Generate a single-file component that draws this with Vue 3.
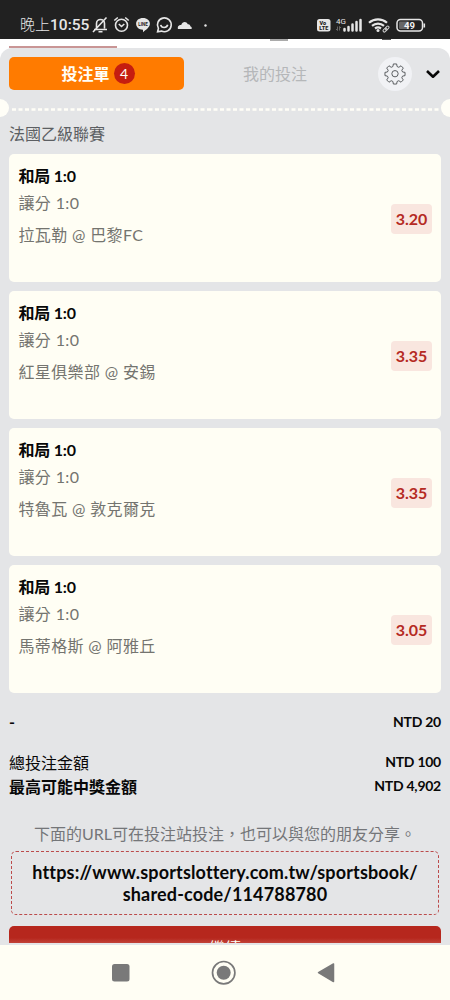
<script setup>
import { ref } from 'vue'

// 投注單內容
const bets = ref([
    { pick: '和局 1:0', market: '讓分 1:0', match: '拉瓦勒 @ 巴黎FC', odds: '3.20' },
    { pick: '和局 1:0', market: '讓分 1:0', match: '紅星俱樂部 @ 安錫', odds: '3.35' },
    { pick: '和局 1:0', market: '讓分 1:0', match: '特魯瓦 @ 敦克爾克', odds: '3.35' },
    { pick: '和局 1:0', market: '讓分 1:0', match: '馬蒂格斯 @ 阿雅丘', odds: '3.05' }
])
</script>

<template>
    <div class="phone">
        <!-- 狀態列 -->
        <header class="status">
            <span class="time">晚上<b>10:55</b></span>
            <svg class="status-left" width="124" height="20" viewBox="0 0 124 20" fill="none" stroke="#e6e6e6" stroke-width="1.6">
                <!-- 靜音 -->
                <path d="M2 14.500h13M4.500 13.500V8.500a4 4 0 0 1 8 0v5M6.500 16.800h4M1 17L14.500 2.500" />
                <!-- 鬧鐘 -->
                <circle cx="29.500" cy="10.300" r="6" />
                <path d="M26.800 9l2.700 2.500L32.300 9M22.300 5.500l3.500-3M36.700 5.500l-3.500-3" />
                <!-- LINE -->
                <path d="M51 3c4.100 0 6.900 2.500 6.900 5.800 0 3.500-4 6-6.900 8.500v-2.600c-4.100 0-6.900-2.500-6.900-5.900S46.900 3 51 3z" fill="#e6e6e6" stroke="none" />
                <text x="51" y="10.800" font-size="4.500" font-weight="700" text-anchor="middle" fill="#222" stroke="none">LINE</text>
                <!-- 對話 -->
                <path d="M65.600 16.700l.8-3.300a6.900 6.900 0 1 1 3 2.700z" />
                <path d="M68.700 9.800c.8 3.600 6 3.600 7 0" />
                <!-- 雲 -->
                <path d="M86 14c-.8-2.500 1-4.200 3.200-4 1-3.300 5-4.200 6.600-.8 1.800-.3 2.500 1 2.500 2 1.400.3 1.900 1.800 1.200 2.800z" fill="#e6e6e6" stroke="none" />
                <circle cx="113.500" cy="10.500" r="1.200" fill="#e6e6e6" stroke="none" />
            </svg>
            <svg class="status-right" width="110" height="20" viewBox="0 0 110 20" fill="none" stroke="#e6e6e6">
                <!-- VoLTE -->
                <rect x="1" y="4" width="13.500" height="12.500" rx="2.500" fill="#e6e6e6" stroke="none" />
                <g fill="#222" stroke="none" font-weight="900" text-anchor="middle">
                    <text x="6.800" y="9.900" font-size="5.500">Vo</text>
                    <text x="7.800" y="15.200" font-size="5.500">LTE</text>
                </g>
                <!-- 訊號 -->
                <text x="20" y="8.800" font-size="8" fill="#e6e6e6" stroke="none">4G</text>
                <path d="M21.500 11.500v4l-1.500-1.500M23.500 15.500v-4l1.500 1.500" stroke="#777" stroke-width=".8" />
                <path d="M28.500 14V15.500M32.500 12V15.500M36.500 9.500V15.500M40.500 7V15.500M44.500 5V15.500" stroke-width="2.500" stroke-linecap="round" />
                <!-- Wi-Fi -->
                <path d="M53 7.800c5.200-4.600 12.800-4.600 18 0M56 10.800c3.500-3 8.500-3 12 0M59 13.500c2-1.500 4-1.500 6 0" stroke-width="2.200" />
                <circle cx="62" cy="15.500" r="1.500" fill="#e6e6e6" stroke="none" />
                <g transform="rotate(-45 70 14)" stroke-width="1" stroke="#ccc">
                    <rect x="66.300" y="12.800" width="4.400" height="2.500" rx="1.200" />
                    <rect x="69.300" y="12.800" width="4.400" height="2.500" rx="1.200" />
                </g>
                <!-- 電量 -->
                <rect x="81" y="4.500" width="25.500" height="11.500" rx="3.500" stroke-width="1.500" />
                <rect x="83" y="6.500" width="10" height="7.500" rx="1" fill="#666" stroke="none" />
                <path d="M108.300 8.500v4" stroke-width="1.600" />
                <text x="93.500" y="13.500" font-size="9.500" font-weight="700" text-anchor="middle" fill="#f2f2f2" stroke="none">49</text>
            </svg>
        </header>

        <!-- 底層頁面露出的部分 -->
        <div class="behind">
            <i class="scrap"></i>
            <i class="scrap small"></i>
            <i class="red-line"></i>
        </div>

        <main class="sheet">
            <div class="tabs">
                <div class="tab active">投注單<span class="count">4</span></div>
                <div class="tab">我的投注</div>
                <div class="gear">
                    <svg width="22" height="22" viewBox="-0.500 0 23 23" fill="none" stroke="#55585b" stroke-width="1">
                        <path d="M9.300 1h3.400l.5 2.700 1.800.8 2.300-1.600 2.400 2.400-1.600 2.300.8 1.800 2.600.4v3.400l-2.600.5-.8 1.800 1.600 2.200-2.400 2.400-2.300-1.600-1.800.8-.5 2.700H9.300l-.5-2.700-1.800-.8-2.300 1.600-2.400-2.400 1.600-2.200-.8-1.800L.5 13.200V9.800l2.600-.4.8-1.800-1.600-2.300 2.400-2.400L7 4.500l1.800-.8z" stroke-linejoin="round" />
                        <circle cx="11" cy="11.200" r="3.300" />
                    </svg>
                </div>
                <svg class="arrow" width="14" height="10" viewBox="0 0 14 10" fill="none" stroke="#080808" stroke-width="2.600">
                    <path d="M1 2l6 5.700L13 2" stroke-linejoin="round" />
                </svg>
            </div>

            <!-- 票券撕線 -->
            <div class="tear">
                <i class="notch"></i>
                <svg width="432" height="3" viewBox="0 0 432 3">
                    <path d="M3 1.500h428" stroke="#fffef7" stroke-width="2.600" stroke-dasharray="4 2.500" />
                </svg>
                <i class="notch"></i>
            </div>

            <h2 class="league">法國乙級聯賽</h2>
            <div class="list">
                <div v-for="bet in bets" :key="bet.match" class="card">
                    <div class="info">
                        <div class="pick">{{ bet.pick }}</div>
                        <div class="market">{{ bet.market }}</div>
                        <div class="match">{{ bet.match }}</div>
                    </div>
                    <span class="odds">{{ bet.odds }}</span>
                </div>
            </div>

            <!-- 金額 -->
            <div class="sum first"><b>-</b><span class="money">NTD 20</span></div>
            <div class="sum"><span>總投注金額</span><span class="money">NTD 100</span></div>
            <div class="sum"><b>最高可能中獎金額</b><span class="money">NTD 4,902</span></div>

            <p class="hint">下面的URL可在投注站投注，也可以與您的朋友分享。</p>
            <div class="url">https://www.sportslottery.com.tw/sportsbook/<br>shared-code/114788780</div>
            <div class="submit">繼續</div>
        </main>

        <!-- 系統導覽鍵 -->
        <nav class="nav">
            <svg width="450" height="55" viewBox="0 0 450 55" fill="#797979">
                <rect x="112" y="19" width="17.500" height="17.500" rx="2.500" />
                <circle cx="223.700" cy="27.700" r="11.200" fill="none" stroke="#797979" stroke-width="1.700" />
                <circle cx="223.700" cy="27.700" r="7" />
                <path d="M318.500 27.700L333.500 19v17.500z" stroke="#797979" stroke-width="1.500" stroke-linejoin="round" />
            </svg>
        </nav>
    </div>
</template>

<style>
body {
    background: #fffef7;
}
</style>

<style scoped>
.phone {
    width: 450px;
    height: 1000px;
    display: flex;
    flex-direction: column;
    overflow: hidden;
    background: #fff;
    font-family: Lato, "Noto Sans CJK TC", sans-serif;
    color: #080808;
}
.status {
    height: 39px;
    flex: none;
    display: flex;
    align-items: flex-start;
    box-sizing: border-box;
    padding: 15px 24px 0 20px;
    background: #212121;
    color: #e6e6e6;
    font-family: Roboto, "Noto Sans CJK TC", sans-serif;
}
.time {
    width: 72px;
    font-size: 15px;
    line-height: 21px;
    font-weight: 300;
    white-space: nowrap;
}
.time b {
    font-size: 15.5px;
    font-weight: 500;
}
.status-right {
    margin-left: auto;
}
.behind {
    height: 9px;
    flex: none;
    display: grid;
    grid-template-columns: 9px 108px 153px 18px 94px 9px;
    align-content: space-between;
}
.scrap {
    grid-column: 4;
    height: 2px;
    background: #aaa;
}
.scrap.small {
    grid-column: 6;
    height: 1px;
    background: #555;
}
.red-line {
    grid-column: 2;
    height: 2px;
    background: #c99595;
}
.sheet {
    height: 897px;
    flex: none;
    overflow: hidden;
    box-sizing: border-box;
    padding: 9px 9px 2px;
    background: #e4e5e7;
    border-radius: 12px 12px 0 0;
    display: flex;
    flex-direction: column;
}
.tabs {
    height: 33px;
    flex: none;
    display: flex;
    align-items: center;
}
.tab {
    width: 175px;
    height: 33px;
    box-sizing: border-box;
    padding-bottom: 1px;
    display: flex;
    align-items: center;
    justify-content: center;
    font-size: 16px;
    color: #b5b7b9;
    margin-right: 3px;
}
.tab.active {
    padding: 0 0 1px 3px;
    color: #fffef7;
    font-weight: 700;
    background: #ff7b00;
    border-radius: 5px;
}
.tab + .tab {
    width: 176px;
    margin-right: 5px;
}
.count {
    width: 21px;
    height: 21px;
    line-height: 21px;
    margin-left: 4px;
    border-radius: 50%;
    text-align: center;
    font-size: 14px;
    font-weight: 400;
    background: #c51d10;
}
.gear {
    width: 34px;
    height: 34px;
    margin-left: 10px;
    border-radius: 50%;
    background: #f1f2f5;
    display: flex;
    align-items: center;
    justify-content: center;
}
.arrow {
    margin-left: 14px;
}
/* 兩側半圓缺口加虛線 */
.tear {
    height: 20px;
    flex: none;
    margin: 8px -18px 0;
    display: flex;
    align-items: center;
    justify-content: space-between;
}
.tear svg {
    margin-top: 2px;
}
.notch {
    width: 18px;
    height: 18px;
    border-radius: 50%;
    background: #fffef7;
}
.league {
    height: 36.4px;
    line-height: 32px;
    margin: 0;
    flex: none;
    font-size: 16px;
    font-weight: 400;
    color: #5c5f63;
}
.list {
    display: flex;
    flex-direction: column;
    gap: 9px;
}
.card {
    height: 128px;
    box-sizing: border-box;
    padding: 8px 9px 0 9.5px;
    display: flex;
    justify-content: space-between;
    background: #fffef4;
    border-radius: 5px;
}
.pick,
.market,
.match {
    font-size: 16px;
    line-height: 27px;
    color: #74746f;
    white-space: nowrap;
    font-weight: 400;
}
.pick {
    color: #080808;
    font-weight: 700;
    letter-spacing: -0.2px;
}
.market,
.match {
    letter-spacing: 0.35px;
}
.match {
    margin-top: 5px;
}
.odds {
    width: 41px;
    height: 30px;
    margin-top: 41.3px;
    line-height: 29px;
    border-radius: 4px;
    text-align: center;
    font-size: 16px;
    font-weight: 700;
    color: #b52a23;
    background: #f9e6df;
}
.sum {
    height: 24px;
    flex: none;
    display: flex;
    align-items: center;
    justify-content: space-between;
    font-size: 16px;
    font-weight: 400;
}
.sum b {
    font-weight: 700;
}
.sum.first {
    margin: 16.6px 0 16px;
}
.money {
    font-size: 14px;
    font-weight: 700;
    letter-spacing: -0.25px;
}
.hint {
    margin: 24px 0 5px;
    line-height: 24px;
    flex: none;
    text-align: center;
    font-size: 16px;
    font-weight: 400;
    color: #747679;
    white-space: nowrap;
}
.url {
    height: 64px;
    flex: none;
    box-sizing: border-box;
    margin: 0 2px;
    padding-top: 9px;
    border: 1px dashed #bb4b4b;
    border-radius: 5px;
    text-align: center;
    font-size: 18px;
    font-weight: 700;
    line-height: 22px;
    letter-spacing: 0.16px;
    white-space: nowrap;
}
.submit {
    flex: 1;
    min-height: 0;
    margin-top: 11px;
    line-height: 44px;
    overflow: hidden;
    border-radius: 5px 5px 0 0;
    background: linear-gradient(#b6271d 70%, #c14238);
    color: #fffef7;
    text-align: center;
    font-size: 16px;
}
.nav {
    height: 55px;
    flex: none;
    background: #fffef4;
}
</style>
